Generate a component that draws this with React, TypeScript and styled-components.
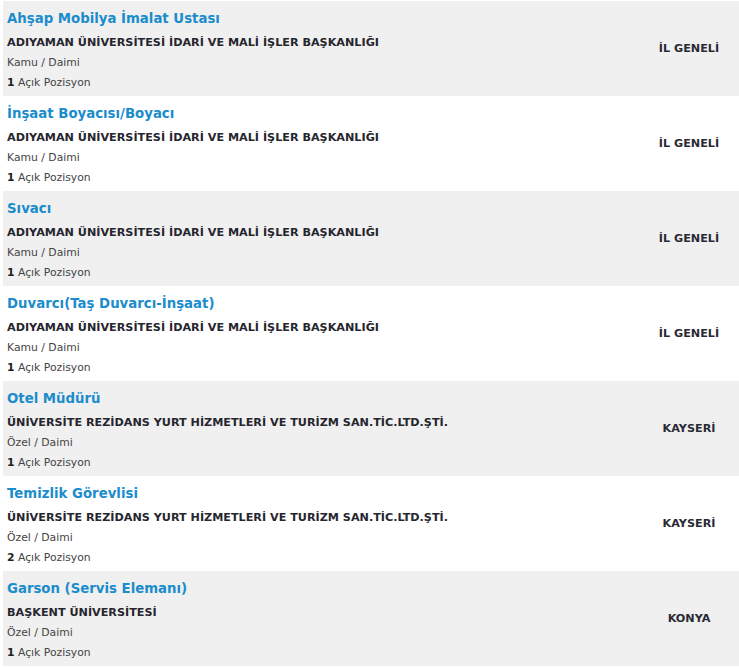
import React from "react";
import styled, { createGlobalStyle } from "styled-components";

const GlobalStyle = createGlobalStyle`
  html, body { margin: 0; padding: 0; background: #ffffff; }
  body { font-family: "DejaVu Sans", Verdana, sans-serif; }
`;

const List = styled.ul`
  list-style: none;
  margin: 0;
  padding: 1px 0 0 3px;
  display: flex;
  flex-direction: column;
`;

const Row = styled.li<{ $alt: boolean }>`
  display: flex;
  align-items: stretch;
  height: 95px;
  box-sizing: border-box;
  padding: 8px 0 0 4px;
  background: ${(p) => (p.$alt ? "#ffffff" : "#f0f0f0")};
`;

const Info = styled.div`
  flex: 1;
  display: flex;
  flex-direction: column;
`;

const Title = styled.a`
  font-size: 13.3px;
  font-weight: bold;
  line-height: 20px;
  color: #1b8ccc;
  text-decoration: none;
  margin-bottom: 4px;
`;

const Company = styled.div`
  font-size: 11.2px;
  font-weight: bold;
  line-height: 20px;
  color: #26262e;
`;

const Meta = styled.div`
  font-size: 10.8px;
  line-height: 20px;
  color: #444;
  b { color: #222; }
`;

const Location = styled.div`
  width: 100px;
  display: flex;
  align-items: center;
  justify-content: center;
  font-size: 11.2px;
  font-weight: bold;
  color: #2a2a35;
  padding-bottom: 8px;
`;

type Job = { title: string; company: string; type: string; count: number; loc: string };

const jobs: Job[] = [
  { title: "Ahşap Mobilya İmalat Ustası", company: "ADIYAMAN ÜNİVERSİTESİ İDARİ VE MALİ İŞLER BAŞKANLIĞI", type: "Kamu / Daimi", count: 1, loc: "İL GENELİ" },
  { title: "İnşaat Boyacısı/Boyacı", company: "ADIYAMAN ÜNİVERSİTESİ İDARİ VE MALİ İŞLER BAŞKANLIĞI", type: "Kamu / Daimi", count: 1, loc: "İL GENELİ" },
  { title: "Sıvacı", company: "ADIYAMAN ÜNİVERSİTESİ İDARİ VE MALİ İŞLER BAŞKANLIĞI", type: "Kamu / Daimi", count: 1, loc: "İL GENELİ" },
  { title: "Duvarcı(Taş Duvarcı-İnşaat)", company: "ADIYAMAN ÜNİVERSİTESİ İDARİ VE MALİ İŞLER BAŞKANLIĞI", type: "Kamu / Daimi", count: 1, loc: "İL GENELİ" },
  { title: "Otel Müdürü", company: "ÜNİVERSİTE REZİDANS YURT HİZMETLERİ VE TURİZM SAN.TİC.LTD.ŞTİ.", type: "Özel / Daimi", count: 1, loc: "KAYSERİ" },
  { title: "Temizlik Görevlisi", company: "ÜNİVERSİTE REZİDANS YURT HİZMETLERİ VE TURİZM SAN.TİC.LTD.ŞTİ.", type: "Özel / Daimi", count: 2, loc: "KAYSERİ" },
  { title: "Garson (Servis Elemanı)", company: "BAŞKENT ÜNİVERSİTESİ", type: "Özel / Daimi", count: 1, loc: "KONYA" },
];

export default function App() {
  return (
    <>
      <GlobalStyle />
      <List>
        {jobs.map((j, i) => (
          <Row key={i} $alt={i % 2 === 1}>
            <Info>
              <Title href="#">{j.title}</Title>
              <Company>{j.company}</Company>
              <Meta>{j.type}</Meta>
              <Meta><b>{j.count}</b> Açık Pozisyon</Meta>
            </Info>
            <Location>{j.loc}</Location>
          </Row>
        ))}
      </List>
    </>
  );
}
